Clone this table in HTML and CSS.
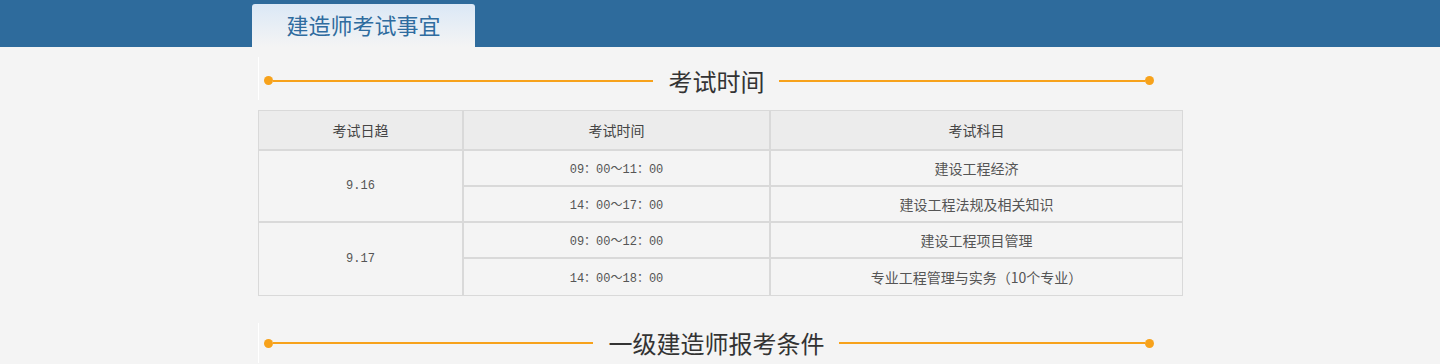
FILE: index.html
```html
<!DOCTYPE html>
<html lang="zh-CN">
<head>
<meta charset="utf-8">
<title>建造师考试事宜</title>
<link rel="stylesheet" href="styles.css">
</head>
<body>
<header class="topbar">
  <div class="wrap">
    <div class="tab">建造师考试事宜</div>
  </div>
</header>
<main class="wrap">
  <section class="content">
    <div class="heading">
      <span class="dot"></span>
      <span class="line line-left"></span>
      <h2 class="title">考试时间</h2>
      <span class="line"></span>
      <span class="dot"></span>
    </div>
    <table class="exam">
      <colgroup>
        <col class="c1"><col class="c2"><col class="c3">
      </colgroup>
      <thead>
        <tr><th>考试日趋</th><th>考试时间</th><th>考试科目</th></tr>
      </thead>
      <tbody>
        <tr><td rowspan="2" class="num">9.16</td><td class="num">09：00～11：00</td><td>建设工程经济</td></tr>
        <tr><td class="num">14：00～17：00</td><td>建设工程法规及相关知识</td></tr>
        <tr><td rowspan="2" class="num">9.17</td><td class="num">09：00～12：00</td><td>建设工程项目管理</td></tr>
        <tr class="last"><td class="num">14：00～18：00</td><td>专业工程管理与实务（10个专业）</td></tr>
      </tbody>
    </table>
    <div class="heading heading-2">
      <span class="dot"></span>
      <span class="line line-left"></span>
      <h2 class="title">一级建造师报考条件</h2>
      <span class="line"></span>
      <span class="dot"></span>
    </div>
  </section>
</main>
</body>
</html>
```
FILE: styles.css
```css
html, body {
  margin: 0;
  padding: 0;
  background: #f4f4f4;
  font-family: "Noto Sans CJK SC", "Noto Sans", sans-serif;
}

.wrap {
  width: 940px;
  margin: 0 auto;
}

.topbar {
  background: #2e6b9c;
  height: 47px;
}

.topbar .wrap {
  display: flex;
  align-items: flex-end;
  height: 47px;
}

.tab {
  margin-left: 2px;
  width: 223px;
  height: 43px;
  box-sizing: border-box;
  border-radius: 3px 3px 0 0;
  background: linear-gradient(#dbe8f6, #f4f4f4);
  color: #2f6c9f;
  font-size: 22px;
  line-height: 41px;
  text-align: center;
}

.content {
  margin-left: 8px;
  width: 925px;
  padding-top: 10px;
}

.heading {
  width: 896px;
  height: 43px;
  box-sizing: border-box;
  border-left: 1px solid #ffffff;
  padding-left: 5px;
  padding-top: 4px;
  display: flex;
  align-items: center;
}

.heading-2 {
  margin-top: 27px;
  height: 40px;
  padding-top: 0;
}

.dot {
  width: 9px;
  height: 9px;
  border-radius: 50%;
  background: #f7a21b;
  flex: none;
}

.line {
  flex: 1 1 0;
  height: 2px;
  background: #f7a21b;
}

.line-left {
  flex: 1 1 13px;
}

.title {
  margin: 0 14px 0 16px;
  font-size: 24px;
  font-weight: normal;
  color: #333333;
  line-height: 30px;
  white-space: nowrap;
}

.exam {
  margin-top: 10px;
  width: 925px;
  border-collapse: separate;
  border-spacing: 0;
  table-layout: fixed;
  font-size: 14px;
  color: #555555;
}

.c1 { width: 205px; }
.c2 { width: 307px; }
.c3 { width: 413px; }

.exam th,
.exam td {
  border: 1px solid #d9d9d9;
  text-align: center;
  padding: 0;
  font-weight: normal;
}

.exam th {
  background: #ececec;
  height: 38px;
  color: #444444;
}

.exam td {
  height: 34px;
}

.exam .last td {
  height: 36px;
}

.num {
  font-family: "Liberation Mono", "Noto Sans CJK SC", monospace;
  font-size: 12px;
}
```
